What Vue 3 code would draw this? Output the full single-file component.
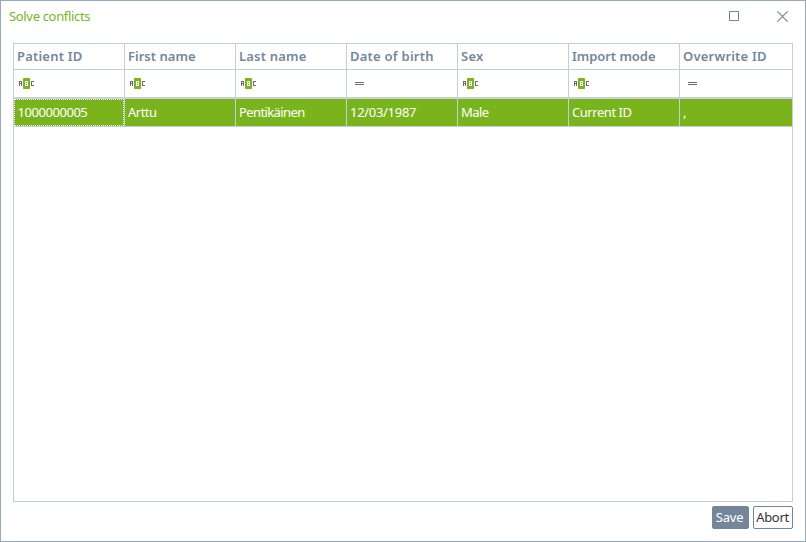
<script setup>
const columns = [
  { title: 'Patient ID', filter: 'text', value: '1000000005', ht: 0.2, vt: -0.45 },
  { title: 'First name', filter: 'text', value: 'Arttu', ht: 0.02, vt: -0.5 },
  { title: 'Last name', filter: 'text', value: 'Pentikäinen', ht: 0.2, vt: -0.6 },
  { title: 'Date of birth', filter: 'equals', value: '12/03/1987', ht: 0.24, vt: -0.3 },
  { title: 'Sex', filter: 'text', value: 'Male', ht: 0.3, vt: -0.6 },
  { title: 'Import mode', filter: 'text', value: 'Current ID', ht: -0.05, vt: -0.45 },
  { title: 'Overwrite ID', filter: 'equals', value: ',', ht: 0.2, vt: 0 },
]
</script>

<template>
  <div class="window">
    <header class="titlebar">
      <span class="title">Solve conflicts</span>
      <svg class="max" width="10" height="10" viewBox="0 0 10 10"><rect x=".5" y=".5" width="9" height="9" /></svg>
      <svg class="close" width="11" height="11" viewBox="0 0 11 11"><path d="M.4 .4L10.6 10.6M10.6 .4L.4 10.6" /></svg>
    </header>
    <main class="table">
      <div class="row head">
        <div v-for="c in columns" :key="c.title" class="cell"><span :style="{ letterSpacing: c.ht + 'px' }">{{ c.title }}</span></div>
      </div>
      <div class="row filters">
        <div v-for="c in columns" :key="c.title" class="cell">
          <svg v-if="c.filter === 'text'" class="abc" width="16" height="11" viewBox="0 0 16 11">
            <rect class="badge" x="4" width="7" height="11" rx=".8" />
            <g shape-rendering="crispEdges">
              <path class="letter" d="M.5 8V3M2.5 8V3M1 3.5H2M1 5.5H2M15 3.5H12.5V7.5H15" />
              <path class="inner" d="M6.5 3.5H8.5V7.5H6.5ZM6.5 5.5H8.5" />
            </g>
          </svg>
          <svg v-else class="eq" width="9" height="3" viewBox="0 0 9 3" shape-rendering="crispEdges"><path d="M0 .5H9M0 2.5H9" /></svg>
        </div>
      </div>
      <div class="row record">
        <div v-for="c in columns" :key="c.title" class="cell"><span :style="{ letterSpacing: c.vt + 'px' }">{{ c.value }}</span></div>
      </div>
    </main>
    <footer class="actions">
      <button class="btn save">Save</button>
      <button class="btn abort">Abort</button>
    </footer>
  </div>
</template>

<style>
body { margin: 0; background: #fff; }
</style>

<style scoped>
.window {
  box-sizing: border-box;
  width: 806px;
  height: 542px;
  border: 1px solid #93a9bf;
  padding: 0 12px;
  display: flex;
  flex-direction: column;
  background: #fff;
  font: 13px/18px "Noto Sans", "Open Sans", sans-serif;
}
.titlebar { height: 42px; display: flex; align-items: flex-start; }
.title { margin: 6px auto 0 -4px; color: #7ab41d; letter-spacing: -0.33px; }
.max { margin: 10px 38px 0 0; }
.close { margin: 10px 5px 0 0; }
.max rect, .close path { fill: none; stroke: #748799; stroke-width: 1; }
.close path { stroke-width: 1.2; }
.table { box-sizing: border-box; width: 780px; height: 459px; border: 1px solid #c3ced9; }
.row { display: grid; grid-template-columns: repeat(6, 111px) 112px; }
.cell {
  box-sizing: border-box;
  display: flex;
  align-items: center;
  padding-left: 3px;
  border-right: 1px solid #c3ced9;
  white-space: nowrap;
}
.cell:last-child { border-right: 0; }
.head { height: 25px; border-bottom: 1px solid #c3ced9; color: #748799; font-weight: 600; }
.head .cell, .record .cell { padding-bottom: 2px; }
.filters { height: 27px; border-bottom: 2px solid #c8d2dc; }
.abc { margin-left: 2px; }
.badge { fill: #7ab41d; }
.letter { fill: none; stroke: #6b6974; }
.inner { fill: none; stroke: #fff; }
.eq { margin-left: 5px; }
.eq path { stroke: #6b6974; }
.record { height: 27px; border-bottom: 1px solid #c3ced9; background: #7ab41d; color: #fff; }
.record .cell:first-child {
  width: 110px;
  border: 1px dotted #fff;
  box-shadow: 1px 0 0 #c3ced9;
  padding-left: 2.5px;
}
.actions { margin-top: 4px; display: flex; justify-content: flex-end; gap: 4px; }
.btn {
  box-sizing: border-box;
  height: 23px;
  margin: 0;
  padding: 0 0 1px;
  border: 1px solid #748799;
  border-radius: 2px;
  font: inherit;
  letter-spacing: -0.2px;
}
.save { width: 37px; padding-right: 2px; background: #748799; color: #fff; }
.abort { width: 40px; padding-right: 1px; background: #fff; color: #333; letter-spacing: -0.3px; }
</style>
